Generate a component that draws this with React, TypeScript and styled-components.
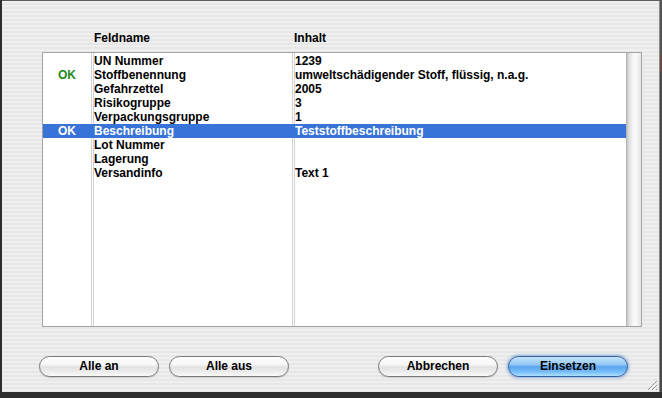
import React from "react";
import styled, { createGlobalStyle } from "styled-components";

const GlobalStyle = createGlobalStyle`
  html, body {
    margin: 0;
    padding: 0;
    overflow: hidden;
    background: #2e2e2e;
  }
`;

const FONT = `"Liberation Sans", Arial, sans-serif`;

const Screen = styled.div`
  position: relative;
  display: flex;
  width: 662px;
  height: 398px;
  background: #2e2e2e;
  font-family: ${FONT};
`;

const Window = styled.div`
  position: relative;
  display: flex;
  flex-direction: column;
  box-sizing: border-box;
  margin-left: 2px;
  width: 658px;
  height: 392px;
  border-top: 1px solid #5c5c5c;
  border-right: 1px solid #8a8a8a;
  background: repeating-linear-gradient(
    to bottom,
    #efefef 0px,
    #efefef 2px,
    #e7e7e7 2px,
    #e7e7e7 4px
  );
`;

const BehindStrip = styled.div`
  flex: 1;
  height: 392px;
  background: linear-gradient(
    to bottom,
    #555 0px,
    #555 55px,
    #6b4a40 55px,
    #6b4a40 72px,
    #4a4a4a 72px,
    #4a4a4a 100%
  );
`;

const HeaderRow = styled.div`
  display: grid;
  grid-template-columns: 52px 200px 1fr;
  margin: 30px 0 0 40px;
  height: 14px;
  font-size: 12px;
  line-height: 14px;
  font-weight: bold;
  color: #000;
`;

const HeaderCell = styled.div<{ $col: number }>`
  grid-column: ${({ $col }) => $col};
`;

const TableBox = styled.div`
  display: flex;
  box-sizing: border-box;
  margin: 7px 0 0 40px;
  width: 600px;
  height: 275px;
  border: 1px solid #a4a4a4;
`;

const Body = styled.div`
  flex: 1;
  display: flex;
  flex-direction: column;
  padding-top: 1px;
  background:
    linear-gradient(#d3d3d3, #d3d3d3) 48px 0 / 1px 100% no-repeat,
    linear-gradient(#d3d3d3, #d3d3d3) 50px 0 / 1px 100% no-repeat,
    linear-gradient(#d3d3d3, #d3d3d3) 249px 0 / 1px 100% no-repeat,
    linear-gradient(#d3d3d3, #d3d3d3) 251px 0 / 1px 100% no-repeat,
    #ffffff;
`;

const Row = styled.div<{ $selected?: boolean }>`
  display: grid;
  grid-template-columns: 48px 3px 198px 3px 1fr;
  height: 14px;
  font-size: 12px;
  line-height: 14px;
  font-weight: bold;
  color: ${({ $selected }) => ($selected ? "#ffffff" : "#000000")};
  background: ${({ $selected }) => ($selected ? "#3874d8" : "transparent")};
  white-space: nowrap;
`;

const StatusCell = styled.div<{ $selected?: boolean }>`
  grid-column: 1;
  text-align: center;
  color: ${({ $selected }) => ($selected ? "#ffffff" : "#1e8a1e")};
`;

const NameCell = styled.div`
  grid-column: 3;
`;

const ValueCell = styled.div`
  grid-column: 5;
`;

const ScrollTrack = styled.div`
  width: 15px;
  background: linear-gradient(
    to right,
    #acacac 0%,
    #d6d6d6 14%,
    #f3f3f3 42%,
    #fbfbfb 62%,
    #e6e6e6 100%
  );
`;

const ButtonBar = styled.div`
  display: flex;
  justify-content: space-between;
  margin: 29px 31px 0 37px;
`;

const ButtonGroup = styled.div`
  display: flex;
  gap: 10px;
`;

const PillButton = styled.button<{ $primary?: boolean }>`
  box-sizing: border-box;
  width: 120px;
  height: 21px;
  padding: 0;
  border-radius: 11px;
  font-family: ${FONT};
  font-size: 12px;
  font-weight: bold;
  color: #000;
  line-height: 19px;
  border: 1px solid ${({ $primary }) => ($primary ? "#35609c" : "#7a7a7a")};
  background: ${({ $primary }) =>
    $primary
      ? "linear-gradient(to bottom, #c6e3fd 0%, #93c8f6 40%, #5aa4ee 52%, #76bdf7 78%, #ade0fe 100%)"
      : "linear-gradient(to bottom, #ffffff 0%, #f5f5f5 42%, #e2e2e2 52%, #ececec 78%, #fafafa 100%)"};
  box-shadow: ${({ $primary }) =>
    $primary ? "0 0 3px 1px rgba(60, 120, 210, 0.55)" : "0 1px 1px rgba(0, 0, 0, 0.15)"};
`;

const Grip = styled.svg`
  position: absolute;
  right: 1px;
  bottom: 1px;
`;

const rows = [
  { ok: false, name: "UN Nummer", value: "1239" },
  { ok: true, name: "Stoffbenennung", value: "umweltschädigender Stoff, flüssig, n.a.g." },
  { ok: false, name: "Gefahrzettel", value: "2005" },
  { ok: false, name: "Risikogruppe", value: "3" },
  { ok: false, name: "Verpackungsgruppe", value: "1" },
  { ok: true, name: "Beschreibung", value: "Teststoffbeschreibung", selected: true },
  { ok: false, name: "Lot Nummer", value: "" },
  { ok: false, name: "Lagerung", value: "" },
  { ok: false, name: "Versandinfo", value: "Text 1" },
];

export default function App() {
  return (
    <Screen>
      <GlobalStyle />
      <Window>
        <HeaderRow>
          <HeaderCell $col={2}>Feldname</HeaderCell>
          <HeaderCell $col={3}>Inhalt</HeaderCell>
        </HeaderRow>
        <TableBox>
          <Body>
            {rows.map((r) => (
              <Row key={r.name} $selected={r.selected}>
                <StatusCell $selected={r.selected}>{r.ok ? "OK" : ""}</StatusCell>
                <NameCell>{r.name}</NameCell>
                <ValueCell>{r.value}</ValueCell>
              </Row>
            ))}
          </Body>
          <ScrollTrack />
        </TableBox>
        <ButtonBar>
          <ButtonGroup>
            <PillButton>Alle an</PillButton>
            <PillButton>Alle aus</PillButton>
          </ButtonGroup>
          <ButtonGroup>
            <PillButton>Abbrechen</PillButton>
            <PillButton $primary>Einsetzen</PillButton>
          </ButtonGroup>
        </ButtonBar>
        <Grip width="12" height="12" viewBox="0 0 12 12">
          <path d="M11 2 L2 11 M11 6 L6 11 M11 10 L10 11" stroke="#8c8c8c" strokeWidth="1" />
          <path d="M11 3 L3 11 M11 7 L7 11" stroke="#ffffff" strokeWidth="1" />
        </Grip>
      </Window>
      <BehindStrip />
    </Screen>
  );
}
